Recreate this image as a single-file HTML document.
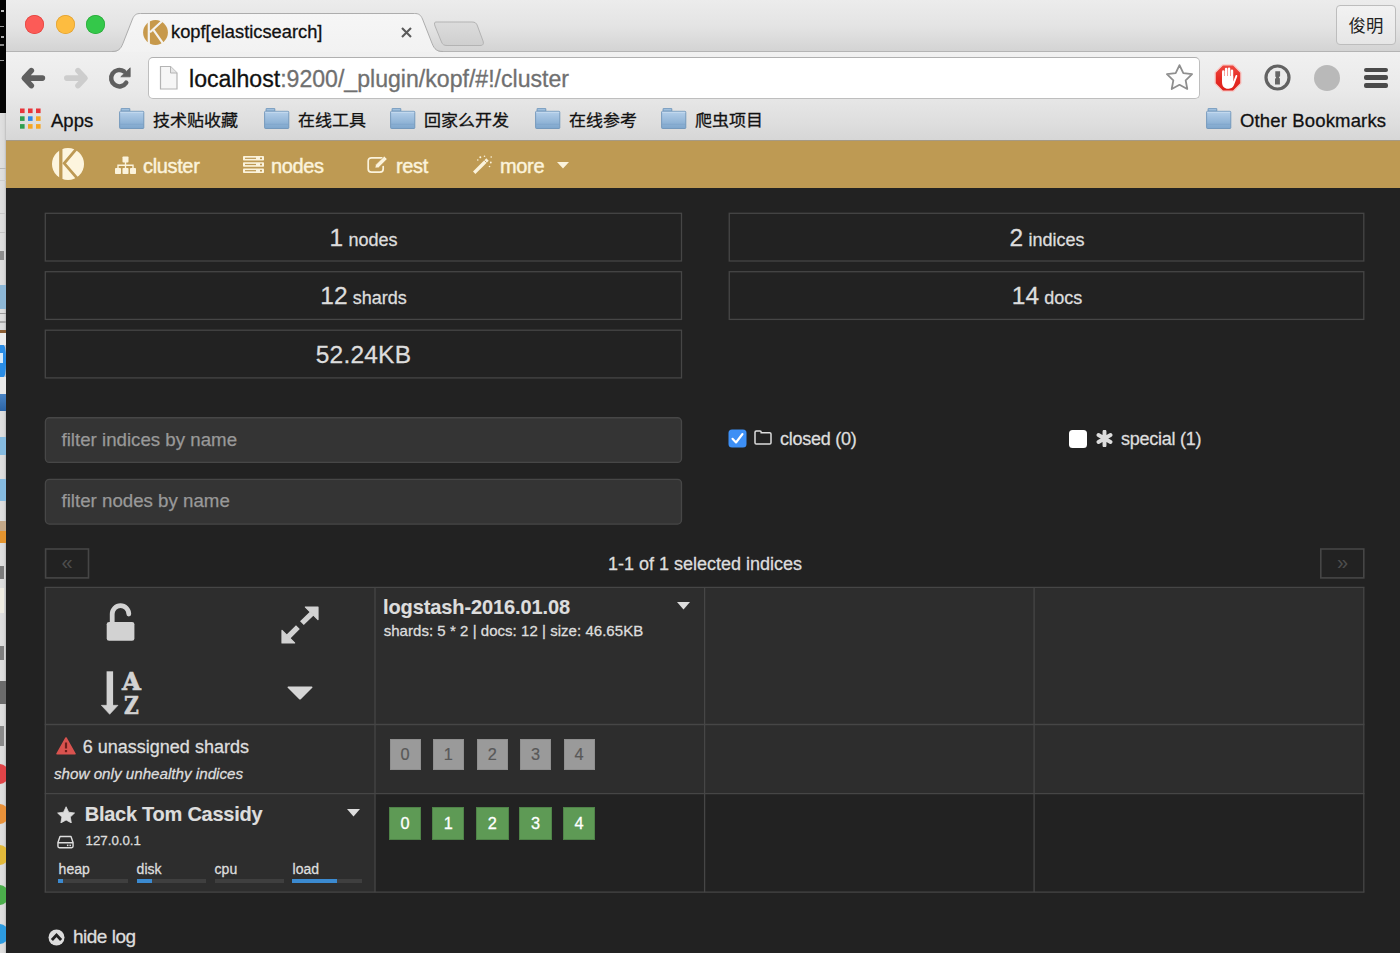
<!DOCTYPE html>
<html lang="en">
<head>
<meta charset="utf-8">
<title>kopf[elasticsearch]</title>
<style>
*{box-sizing:border-box;margin:0;padding:0}
html,body{width:1400px;height:953px;overflow:hidden;background:#222;}
body{-webkit-text-stroke:0.3px;position:relative;font-family:"Liberation Sans","Noto Sans CJK SC",sans-serif;color:#ddd;}
.abs{position:absolute}
/* ---------- left desktop strip ---------- */
#strip{left:0;top:0;width:6px;height:953px;background:#d9d9d9;overflow:hidden;z-index:0}
#strip i{position:absolute;left:0;width:6px;display:block}
/* ---------- browser chrome ---------- */
#tabbar{left:6px;top:0;width:1394px;height:52px;background:linear-gradient(#ececec,#e4e4e4 50%,#d3d3d3);}
#toolbar{left:6px;top:51px;width:1394px;height:90px;background:linear-gradient(#f1f1f1,#e9e9e9 45%,#dedede 80%,#d6d6d6);}
#tabline{left:6px;top:51px;width:1394px;height:1px;background:#b4b4b4}
#chromebottom{left:6px;top:140.3px;width:1394px;height:1px;background:#a59a86}
.tl{border-radius:50%;width:19px;height:19px;top:15px}
#url{left:148px;top:57px;width:1051.5px;height:41.5px;background:#fff;border:1px solid #bebebe;border-top-color:#b0b0b0;border-radius:5px;}
.urltxt{left:189px;top:64.5px;-webkit-text-stroke:0.3px;font-size:23.1px;line-height:28px;color:#707070;white-space:nowrap}
.urltxt b{font-weight:normal;color:#111}
.bm{top:109.7px;-webkit-text-stroke:0.3px #111;font-size:18.5px;line-height:22px;color:#111;white-space:nowrap}
.bm.cjk{font-size:17px;letter-spacing:0;top:110.2px;-webkit-text-stroke:0.3px #111;transform:scaleY(0.93);transform-origin:50% 50%}
.folder{top:108px;width:26px;height:21px}
#user{-webkit-text-stroke:0;left:1336px;top:5px;width:60px;height:39.5px;border:1px solid #bdbdbd;border-radius:4px;background:linear-gradient(#f2f2f2,#e6e6e6);font-size:17.4px;line-height:40px;text-align:center;color:#222}
#tabtitle{left:171px;top:21px;-webkit-text-stroke:0.3px #111;font-size:18.3px;line-height:22px;color:#111;white-space:nowrap}
/* ---------- app navbar ---------- */
#nav{left:6px;top:141px;width:1394px;height:46.7px;background:#be9a53}
.navtxt{top:152.8px;-webkit-text-stroke:0.45px #fbf3dc;font-size:20px;line-height:26px;color:#fbf3dc;white-space:nowrap;letter-spacing:-0.35px}
/* ---------- app body ---------- */
.panel{-webkit-text-stroke:0.3px #ddd;border:1px solid transparent;height:49px;text-align:center;color:#ddd;font-size:18px;line-height:47.6px;white-space:nowrap;letter-spacing:0}
.panel b{font-weight:normal;font-size:24.5px;letter-spacing:0.2px}
.inp{-webkit-text-stroke:0.25px #999;left:45px;width:637px;height:45px;border:1px solid transparent;font-size:18.7px;line-height:43px;color:#999;padding-left:15.5px;white-space:nowrap;letter-spacing:0}
.lbl{-webkit-text-stroke:0.3px #ddd;font-size:18px;line-height:24px;color:#ddd;white-space:nowrap;letter-spacing:0}
.pg{-webkit-text-stroke:0;top:548.5px;width:44.3px;height:30.3px;border:1px solid transparent;color:#4e4e4e;text-align:center;font-size:20px;line-height:25px}
.cell{border:1px solid #444;}
.lt{background:#2d2d2d}
.shard{width:31px;height:31px;font-size:16.3px;line-height:31px;text-align:center}
.sg{background:#5e9a55;color:#fff;box-shadow:inset 0 0 0 1px #4f8348;width:32.6px;height:32.4px;line-height:32px}
.su{background:#9a9a9a;color:#585858;box-shadow:inset 0 0 0 1px #8f8f8f;-webkit-text-stroke:0.2px}
</style>
</head>
<body>
<!-- ======= left strip (desktop behind window) ======= -->
<div id="strip" class="abs">
<i style="top:0;height:113px;background:#030303"></i>
<i style="top:10px;height:2px;left:1px;width:3px;background:#bbb"></i>
<i style="top:26px;height:1px;left:0;width:4px;background:#999"></i>
<i style="top:36px;height:2px;left:1px;width:3px;background:#aaa"></i>
<i style="top:44px;height:2px;left:0;width:4px;background:#888"></i>
<i style="top:60px;height:1px;left:0;width:4px;background:#999"></i>
<i style="top:113px;height:840px;background:linear-gradient(90deg,#e0e0e0,#dadada 70%,#bdbdbd)"></i>
<i style="top:168px;height:1px;background:#b9b9b9"></i>
<i style="top:180px;height:1px;background:#cdcdcd"></i>
<i style="top:213px;height:1px;background:#c8c8c8"></i>
<i style="top:232px;height:1px;background:#c4c4c4"></i>
<i style="top:251px;height:9px;left:0;width:4px;background:#8d8d8d"></i>
<i style="top:285px;height:24px;background:#8db7d6"></i>
<i style="top:313px;height:1px;background:#9a9a9a"></i>
<i style="top:321px;height:2px;background:#a8a8a8"></i>
<i style="top:330px;height:3px;background:#8b5e34"></i>
<i style="top:333px;height:12px;background:#ededed"></i>
<i style="top:345px;height:32px;background:#2a8de6;border-radius:0 40% 40% 0"></i>
<i style="top:353px;height:10px;left:0;width:3px;background:#d8ebfb"></i>
<i style="top:377px;height:17px;background:#e9e9e9"></i>
<i style="top:394px;height:17px;background:linear-gradient(#4a84c4,#2c64a6)"></i>
<i style="top:437px;height:18px;background:#86bbe0"></i>
<i style="top:479px;height:22px;background:#86bbe0"></i>
<i style="top:521px;height:10px;background:#c4a888"></i>
<i style="top:531px;height:12px;background:#e3942f"></i>
<i style="top:566px;height:13px;left:0;width:4px;background:#7b7b7b"></i>
<i style="top:588px;height:25px;left:0;width:4px;background:#efece2"></i>
<i style="top:646px;height:14px;left:0;width:4px;background:#7f7f7f"></i>
<i style="top:681px;height:23px;background:#6b6b6b"></i>
<i style="top:726px;height:20px;left:0;width:4px;background:#8a8a8a"></i>
<i style="top:764px;height:20px;left:-11px;width:20px;border-radius:50%;background:#e04448"></i>
<i style="top:804px;height:20px;left:-11px;width:20px;border-radius:50%;background:#e8913a"></i>
<i style="top:845px;height:20px;left:-11px;width:20px;border-radius:50%;background:#e2b93b"></i>
<i style="top:885px;height:20px;left:-11px;width:20px;border-radius:50%;background:#4cae4c"></i>
<i style="top:924px;height:20px;left:-11px;width:20px;border-radius:50%;background:#2d9be0"></i>
</div>

<div class="abs" style="left:6px;top:947px;width:7px;height:6px;background:#cfcfcf"><div style="width:7px;height:12px;background:#222;border-bottom-left-radius:7px 6px"></div></div>
<!-- ======= chrome: tab bar ======= -->
<div id="tabbar" class="abs"></div>
<div id="toolbar" class="abs"></div>
<div id="tabline" class="abs"></div>
<svg class="abs" style="left:0;top:0" width="1400" height="60" viewBox="0 0 1400 60">
  <defs>
    <linearGradient id="tabg" x1="0" y1="0" x2="0" y2="1"><stop offset="0" stop-color="#f6f6f6"/><stop offset="1" stop-color="#f2f2f2"/></linearGradient>
    <linearGradient id="ntg" x1="0" y1="0" x2="0" y2="1"><stop offset="0" stop-color="#dcdcdc"/><stop offset="1" stop-color="#cfcfcf"/></linearGradient>
  </defs>
  <!-- active tab -->
  <path d="M112 52 C120 52 121.5 47 123.5 42 L132.5 19 C134.5 14.5 136.5 13.5 140.5 13.5 L414.5 13.5 C418.5 13.5 420.5 14.5 422.5 19 L431.5 42 C433.5 47 435 52 443 52 Z" fill="url(#tabg)"/>
  <path d="M112 51.5 C120 51.5 121.5 47 123.5 42 L132.5 19 C134.5 14.5 136.5 13.5 140.5 13.5 L414.5 13.5 C418.5 13.5 420.5 14.5 422.5 19 L431.5 42 C433.5 47 435 51.5 443 51.5" fill="none" stroke="#adadad" stroke-width="1"/>
  <!-- new tab button -->
  <path d="M436 22 L472 22 C475 22 476.5 23 477.5 26 L483 41 C484 44 483 45.5 480 45.5 L447 45.5 C444 45.5 442.5 44.5 441.5 42 L435 26 C434 23 434.5 22 436 22 Z" fill="url(#ntg)" stroke="#b3b3b3" stroke-width="1"/>
</svg>
<div class="abs tl" style="left:24.5px;background:#fc5b57;box-shadow:inset 0 0 0 0.7px #e2443f"></div>
<div class="abs tl" style="left:55.5px;background:#fdbc40;box-shadow:inset 0 0 0 0.7px #dfa133"></div>
<div class="abs tl" style="left:86px;background:#34c84a;box-shadow:inset 0 0 0 0.7px #2aa93a"></div>
<!-- favicon -->
<svg class="abs" style="left:143px;top:19.7px" width="25" height="25" viewBox="0 0 25 25">
  <circle cx="12.5" cy="12.5" r="12.4" fill="#c7994b"/>
  <path d="M5.8 -1 L5.8 26 M20.5 -0.2 L7.0 12.3 M10.4 9.8 L22 26.2" stroke="#f4f2ee" stroke-width="2.2" fill="none"/>
</svg>
<div id="tabtitle" class="abs">kopf[elasticsearch]</div>
<svg class="abs" style="left:400px;top:26px" width="13" height="13" viewBox="0 0 13 13"><path d="M2 2 L11 11 M11 2 L2 11" stroke="#5a5a5a" stroke-width="2.1"/></svg>
<div id="user" class="abs">俊明</div>

<!-- ======= chrome: toolbar ======= -->
<svg class="abs" style="left:18px;top:64px" width="120" height="28" viewBox="0 0 120 28">
  <!-- back -->
  <path d="M24.4 14.1 L7 14.1 M13.3 6.6 L6.3 14.1 L13.3 21.6" stroke="#5f5f5f" stroke-width="5.6" fill="none" stroke-linecap="round" stroke-linejoin="round"/>
  <!-- forward -->
  <path d="M48.8 14.1 L66.3 14.1 M60 6.6 L67 14.1 L60 21.6" stroke="#cdcdcd" stroke-width="5.6" fill="none" stroke-linecap="round" stroke-linejoin="round"/>
  <!-- reload -->
  <path d="M108.2 18.7 A8.2 8.2 0 1 1 106 7.4" stroke="#5f5f5f" stroke-width="4.5" fill="none" stroke-linecap="round"/>
  <path d="M112.2 3.8 L112.2 12.8 L102.8 12.8 Z" fill="#5f5f5f" stroke="#5f5f5f" stroke-width="0.8" stroke-linejoin="round"/>
</svg>
<div id="url" class="abs"></div>
<svg class="abs" style="left:159px;top:65px" width="20" height="26" viewBox="0 0 20 26">
  <path d="M1.5 1.5 L11.5 1.5 L18 8 L18 24 L1.5 24 Z" fill="#f6f6f6" stroke="#b4b4b4" stroke-width="1.2"/>
  <path d="M11.5 1.5 L11.5 8 L18 8" fill="#e6e6e6" stroke="#b4b4b4" stroke-width="1"/>
</svg>
<div class="abs urltxt"><b>localhost</b>:9200/_plugin/kopf/#!/cluster</div>
<!-- star -->
<svg class="abs" style="left:1164px;top:62px" width="31" height="31" viewBox="0 0 31 31">
  <path d="M15.50 3.10 L19.32 11.04 L28.05 12.22 L21.68 18.31 L23.26 26.98 L15.50 22.80 L7.74 26.98 L9.32 18.31 L2.95 12.22 L11.68 11.04 Z" fill="#fdfdfd" stroke="#8e8e8e" stroke-width="1.8" stroke-linejoin="round"/>
</svg>
<!-- adblock -->
<svg class="abs" style="left:1214px;top:63.5px" width="28" height="28" viewBox="0 0 28 28">
  <defs><linearGradient id="adg" x1="0" y1="0" x2="0" y2="1"><stop offset="0" stop-color="#ee4a41"/><stop offset="0.5" stop-color="#e62c25"/><stop offset="1" stop-color="#dd1f1a"/></linearGradient></defs>
  <path d="M8.7 0.9 L19.3 0.9 L26.9 8.6 L26.9 19.4 L19.3 27.1 L8.7 27.1 L1.1 19.4 L1.1 8.6 Z" fill="url(#adg)" stroke="#f6c9c6" stroke-width="1.3" stroke-linejoin="round"/>
  <g fill="#fff">
    <rect x="8.0" y="6.2" width="2.5" height="10" rx="1.25"/>
    <rect x="10.9" y="3.8" width="2.5" height="12" rx="1.25"/>
    <rect x="13.8" y="3.4" width="2.5" height="12" rx="1.25"/>
    <rect x="16.7" y="5.4" width="2.5" height="11" rx="1.25"/>
    <path d="M8 12 L19.2 12 L19.2 17.5 L21.6 11.6 C22.2 10.6 23.6 11.2 23.2 12.4 L20.2 20.5 C18.8 24 16.5 24.8 14 24.8 C10.5 24.8 8 22.5 8 18 Z"/>
  </g>
</svg>
<!-- 1password -->
<svg class="abs" style="left:1263px;top:63px" width="30" height="30" viewBox="0 0 30 30">
  <circle cx="14.5" cy="14.5" r="11.5" fill="#ebebeb" stroke="#626262" stroke-width="3.2"/>
  <path d="M12.3 8.2 L17.1 8.2 L17.1 13 L15.9 14.4 L16.9 15.6 L16.9 21.5 L12 21.5 L12 16 L13.2 14.6 L12.3 13.4 Z" fill="#666"/>
</svg>
<div class="abs" style="left:1314px;top:64.6px;width:26px;height:26px;border-radius:50%;background:#b9b9b9"></div>
<!-- hamburger -->
<div class="abs" style="left:1364.3px;top:67.9px;width:23.7px;height:4.5px;border-radius:2px;background:#4a4a4a"></div>
<div class="abs" style="left:1364.3px;top:75.4px;width:23.7px;height:4.5px;border-radius:2px;background:#4a4a4a"></div>
<div class="abs" style="left:1364.3px;top:83.1px;width:23.7px;height:4.7px;border-radius:2px;background:#4a4a4a"></div>

<!-- ======= chrome: bookmarks bar ======= -->
<svg class="abs" style="left:20px;top:108px" width="21" height="21" viewBox="0 0 21 21">
  <rect x="0" y="0.5" width="4.6" height="4.6" fill="#e8353a"/><rect x="8" y="0.5" width="4.6" height="4.6" fill="#e8353a"/><rect x="16" y="0.5" width="4.6" height="4.6" fill="#e8353a"/>
  <rect x="0" y="8.3" width="4.6" height="4.6" fill="#2f9e4f"/><rect x="8" y="8.3" width="4.6" height="4.6" fill="#2d88e5"/><rect x="16" y="8.3" width="4.6" height="4.6" fill="#f5a623"/>
  <rect x="0" y="16.1" width="4.6" height="4.6" fill="#2f9e4f"/><rect x="8" y="16.1" width="4.6" height="4.6" fill="#f5a623"/><rect x="16" y="16.1" width="4.6" height="4.6" fill="#f5a623"/>
</svg>
<div class="abs bm" style="left:51px">Apps</div>
<svg width="0" height="0" style="position:absolute"><defs>
  <linearGradient id="fg" x1="0" y1="0" x2="0" y2="1"><stop offset="0" stop-color="#b4cfea"/><stop offset="1" stop-color="#7ea6cc"/></linearGradient>
  <symbol id="fold" viewBox="0 0 26 21"><path d="M2.1 3.2 L2.1 0.9 C2.1 0.5 2.3 0.3 2.7 0.3 L10.2 0.3 C10.6 0.3 10.8 0.5 10.8 0.9 L10.8 3.2 Z" fill="#9fbfdd" stroke="#6e94b9" stroke-width="0.9"/><rect x="0.6" y="3.3" width="24.2" height="17.2" rx="0.8" fill="url(#fg)" stroke="#6e94b9" stroke-width="0.9"/><path d="M1.2 4.3 L24.2 4.3" stroke="#c9ddf1" stroke-width="0.9"/><path d="M1.2 16.3 L24.2 16.3" stroke="#769ec4" stroke-width="0.7" opacity="0.6"/></symbol>
</defs></svg>
<svg class="abs folder" style="left:119px"><use href="#fold"/></svg>
<div class="abs bm cjk" style="left:153px">技术贴收藏</div>
<svg class="abs folder" style="left:264px"><use href="#fold"/></svg>
<div class="abs bm cjk" style="left:298px">在线工具</div>
<svg class="abs folder" style="left:390px"><use href="#fold"/></svg>
<div class="abs bm cjk" style="left:424px">回家么开发</div>
<svg class="abs folder" style="left:535px"><use href="#fold"/></svg>
<div class="abs bm cjk" style="left:569px">在线参考</div>
<svg class="abs folder" style="left:661px"><use href="#fold"/></svg>
<div class="abs bm cjk" style="left:695px">爬虫项目</div>
<svg class="abs folder" style="left:1206px"><use href="#fold"/></svg>
<div class="abs bm" style="left:1240px;letter-spacing:0.15px">Other Bookmarks</div>
<div id="chromebottom" class="abs"></div>

<!-- ======= app navbar ======= -->
<div id="nav" class="abs"></div>
<svg class="abs" style="left:52.4px;top:147.9px" width="32" height="32" viewBox="0 0 32 32">
  <circle cx="16" cy="16" r="16" fill="#fdf5de"/>
  <path d="M8.8 -1 L8.8 33" stroke="#bd9954" stroke-width="3.3" fill="none"/>
  <path d="M26 -1 L12.2 15.3 L27.5 33" stroke="#bd9954" stroke-width="2.8" fill="none" stroke-linejoin="miter"/>
</svg>
<!-- sitemap icon -->
<svg class="abs" style="left:115px;top:156px" width="21" height="19" viewBox="0 0 21 19">
  <g fill="#fbf3dc"><rect x="7.5" y="0.5" width="6" height="6" rx="0.8"/><rect x="0" y="12" width="6" height="6" rx="0.8"/><rect x="7.5" y="12" width="6" height="6" rx="0.8"/><rect x="15" y="12" width="6" height="6" rx="0.8"/></g>
  <path d="M10.5 6 L10.5 12 M3 12 L3 9.2 L18 9.2 L18 12" stroke="#fbf3dc" stroke-width="1.4" fill="none"/>
</svg>
<div class="abs navtxt" style="left:143px">cluster</div>
<!-- server icon -->
<svg class="abs" style="left:243px;top:156px" width="21" height="17" viewBox="0 0 21 17">
  <g fill="#fbf3dc"><rect x="0" y="0" width="21" height="4.6" rx="0.8"/><rect x="0" y="6.2" width="21" height="4.6" rx="0.8"/><rect x="0" y="12.4" width="21" height="4.6" rx="0.8"/></g>
  <g fill="#bd9954"><rect x="2" y="1.7" width="11" height="1.2"/><rect x="2" y="7.9" width="11" height="1.2"/><rect x="2" y="14.1" width="11" height="1.2"/><rect x="17" y="1.5" width="2" height="1.6"/><rect x="17" y="7.7" width="2" height="1.6"/><rect x="17" y="13.9" width="2" height="1.6"/></g>
</svg>
<div class="abs navtxt" style="left:271px">nodes</div>
<!-- edit icon -->
<svg class="abs" style="left:367px;top:155px" width="22" height="19" viewBox="0 0 22 19">
  <path d="M15 2.8 L4.5 2.8 C2.5 2.8 1.2 4 1.2 6 L1.2 14 C1.2 16 2.5 17.2 4.5 17.2 L13 17.2 C15 17.2 16.2 16 16.2 14 L16.2 11.5" stroke="#fbf3dc" stroke-width="1.7" fill="none" stroke-linecap="round"/>
  <path d="M8 13 L8.6 9.8 L17.3 1.2 L20.2 4.1 L11.5 12.7 Z" fill="#fbf3dc" stroke="#bd9954" stroke-width="0.6"/>
</svg>
<div class="abs navtxt" style="left:396px">rest</div>
<!-- magic wand icon -->
<svg class="abs" style="left:472px;top:155px" width="21" height="20" viewBox="0 0 21 20">
  <path d="M2.2 17.8 L15.5 4.5" stroke="#fbf3dc" stroke-width="3.4" stroke-linecap="butt"/>
  <path d="M12.4 5.4 L14.6 7.6" stroke="#bd9954" stroke-width="0.9"/>
  <g fill="#fbf3dc"><circle cx="8.3" cy="2.2" r="1"/><circle cx="12.5" cy="1.2" r="0.8"/><circle cx="5.8" cy="5" r="0.8"/><circle cx="18.8" cy="7.5" r="0.9"/><circle cx="17.5" cy="11.5" r="0.8"/><circle cx="19.2" cy="2" r="0.8"/></g>
</svg>
<div class="abs navtxt" style="left:500px">more</div>
<svg class="abs" style="left:557px;top:162px" width="12" height="7" viewBox="0 0 12 7"><path d="M0 0 L12 0 L6 6.5 Z" fill="#fbf3dc"/></svg>

<!-- ======= table grid ======= -->
<div class="abs lt" style="left:45px;top:587px;width:1319px;height:207px"></div>
<div class="abs lt" style="left:45px;top:793px;width:330px;height:99px"></div>
<svg class="abs" style="left:0;top:190px" width="1400" height="763" viewBox="0 190 1400 763" fill="none" stroke="#464646" stroke-width="1.3">
  <rect x="45.3" y="213.3" width="636.20" height="47.70"/>
  <rect x="45.3" y="271.7" width="636.20" height="47.70"/>
  <rect x="45.3" y="330.2" width="636.20" height="47.70"/>
  <rect x="729.25" y="213.3" width="634.55" height="47.70"/>
  <rect x="729.25" y="271.7" width="634.55" height="47.70"/>
  <rect x="45.4" y="417.75" width="636.10" height="44.65" rx="4" fill="#343434" stroke="#474747"/>
  <rect x="45.4" y="479.4" width="636.10" height="44.65" rx="4" fill="#343434" stroke="#474747"/>
  <rect x="45.6" y="549.0" width="42.9" height="28.9" stroke-width="1.6"/>
  <rect x="1320.8" y="549.0" width="43.0" height="28.9" stroke-width="1.6"/>
  <path d="M44.65 587.45 L1364.45 587.45"/>
  <path d="M44.65 724.5 L1364.45 724.5"/>
  <path d="M44.65 793.6 L1364.45 793.6"/>
  <path d="M44.65 892.2 L1364.45 892.2"/>
  <path d="M45.3 587.45 L45.3 892.2"/>
  <path d="M375.0 587.45 L375.0 892.2"/>
  <path d="M704.6 587.45 L704.6 892.2"/>
  <path d="M1034.1 587.45 L1034.1 892.2"/>
  <path d="M1363.8 587.45 L1363.8 892.2"/>
</svg>
<!-- ======= stat panels ======= -->
<div class="abs panel" style="left:45px;top:213px;width:637px"><b>1</b> nodes</div>
<div class="abs panel" style="left:45px;top:271px;width:637px"><b>12</b> shards</div>
<div class="abs panel" style="left:45px;top:330px;width:637px"><b>52.24KB</b></div>
<div class="abs panel" style="left:729px;top:213px;width:636px"><b>2</b> indices</div>
<div class="abs panel" style="left:729px;top:271px;width:636px"><b>14</b> docs</div>

<!-- ======= filters ======= -->
<div class="abs inp" style="top:417px;height:46px;line-height:43.2px">filter indices by name</div>
<div class="abs inp" style="top:479px;height:46px;line-height:42.6px">filter nodes by name</div>
<!-- checked checkbox -->
<svg class="abs" style="left:728px;top:429px" width="19" height="19" viewBox="0 0 19 19">
  <rect x="0.5" y="0.5" width="18" height="18" rx="3.5" fill="#3d8ff5"/>
  <path d="M4.5 9.8 L8 13.5 L14.5 5" stroke="#fff" stroke-width="2.1" fill="none" stroke-linecap="round" stroke-linejoin="round"/>
</svg>
<!-- folder-o icon -->
<svg class="abs" style="left:754px;top:430px" width="18" height="15" viewBox="0 0 18 15">
  <path d="M1 2.2 C1 1.4 1.5 1 2.3 1 L6 1 C6.8 1 7.2 1.4 7.2 2.2 L7.2 2.8 L15.7 2.8 C16.5 2.8 17 3.3 17 4.1 L17 12.7 C17 13.5 16.5 14 15.7 14 L2.3 14 C1.5 14 1 13.5 1 12.7 Z" fill="none" stroke="#ddd" stroke-width="1.5"/>
</svg>
<div class="abs lbl" style="left:780px;top:427px;letter-spacing:-0.25px">closed (0)</div>
<div class="abs" style="left:1069px;top:430px;width:18px;height:18px;border-radius:3.5px;background:#fff"></div>
<!-- asterisk icon -->
<svg class="abs" style="left:1096px;top:430px" width="17" height="17" viewBox="0 0 17 17">
  <path d="M8.5 1.6 L8.5 15.4 M2.5 5 L14.5 12 M14.5 5 L2.5 12" stroke="#ddd" stroke-width="3.9" stroke-linecap="round"/>
</svg>
<div class="abs lbl" style="left:1121px;top:427px;letter-spacing:-0.25px">special (1)</div>

<!-- ======= pager ======= -->
<div class="abs pg" style="left:45px">&laquo;</div>
<div class="abs lbl" style="left:45px;width:1320px;top:552px;text-align:center">1-1 of 1 selected indices</div>
<div class="abs pg" style="left:1320.3px">&raquo;</div>

<!-- header cell icons -->
<!-- unlock -->
<svg class="abs" style="left:105px;top:603px" width="30" height="39" viewBox="0 0 30 39">
  <path d="M7.2 20 L7.2 11 A8.3 8.3 0 0 1 23.8 11" stroke="#d2d2d2" stroke-width="4.8" fill="none" stroke-linecap="round"/>
  <rect x="1.7" y="18.9" width="27.7" height="18.9" rx="2.4" fill="#d2d2d2"/>
</svg>
<!-- expand arrows -->
<svg class="abs" style="left:281px;top:606px" width="38" height="38" viewBox="0 0 38 38">
  <path d="M31 7.4 L20.9 17.1 M7 31 L16.9 21.2" stroke="#d2d2d2" stroke-width="5.4"/>
  <path d="M37 1 L37 13.6 L24.4 1 Z M1 37 L1 24.4 L13.6 37 Z" fill="#d2d2d2" stroke="#d2d2d2" stroke-width="1.2" stroke-linejoin="round"/>
</svg>
<!-- sort A-Z -->
<svg class="abs" style="left:100px;top:670px" width="42" height="46" viewBox="0 0 42 46">
  <path d="M9.85 1.3 L9.85 36" stroke="#d2d2d2" stroke-width="6.5"/>
  <path d="M1.3 35.3 L18 35.3 L9.7 44.3 Z" fill="#d2d2d2" stroke="#d2d2d2" stroke-width="0.6" stroke-linejoin="round"/>
  <text x="21.9" y="19.6" font-family="DejaVu Serif,Liberation Serif,serif" font-weight="bold" font-size="24.7" fill="#d2d2d2" stroke="#d2d2d2" stroke-width="0.7" textLength="18.9" lengthAdjust="spacingAndGlyphs">A</text>
  <text x="24.1" y="44.2" font-family="DejaVu Serif,Liberation Serif,serif" font-weight="bold" font-size="24.7" fill="#d2d2d2" stroke="#d2d2d2" stroke-width="0.7" textLength="14.8" lengthAdjust="spacingAndGlyphs">Z</text>
</svg>
<!-- caret -->
<svg class="abs" style="left:287px;top:686px" width="26" height="14" viewBox="0 0 26 14"><path d="M0.5 1.5 C0.5 0.8 1 0.5 1.6 0.5 L24.4 0.5 C25 0.5 25.5 0.8 25.5 1.5 L13.8 13.2 C13.3 13.7 12.7 13.7 12.2 13.2 Z" fill="#d5d5d5"/></svg>

<!-- index header -->
<div class="abs" style="left:383px;top:595px;font-size:20px;line-height:24px;font-weight:bold;-webkit-text-stroke:0.15px;color:#ddd;letter-spacing:-0.1px;white-space:nowrap">logstash-2016.01.08</div>
<svg class="abs" style="left:677px;top:602px" width="13" height="8" viewBox="0 0 13 8"><path d="M0 0 L13 0 L6.5 7.5 Z" fill="#ddd"/></svg>
<div class="abs" style="left:383.7px;top:621px;font-size:15px;line-height:20px;color:#ddd;letter-spacing:0.04px;white-space:nowrap">shards: 5 * 2 | docs: 12 | size: 46.65KB</div>

<!-- unassigned row -->
<svg class="abs" style="left:56px;top:737px" width="20" height="18" viewBox="0 0 20 18">
  <path d="M10 1 L19 16.8 L1 16.8 Z" fill="#d9534f" stroke="#d9534f" stroke-width="1.6" stroke-linejoin="round"/>
  <path d="M10 5.5 L10 11.5" stroke="#6e1f1c" stroke-width="2.2"/><rect x="8.9" y="13" width="2.2" height="2.2" fill="#6e1f1c"/>
</svg>
<div class="abs lbl" style="left:82.8px;top:735px">6 unassigned shards</div>
<div class="abs" style="left:54px;top:763.6px;font-size:15.2px;line-height:20px;font-style:italic;color:#ddd;letter-spacing:0;white-space:nowrap">show only unhealthy indices</div>
<div class="abs shard su" style="left:389.5px;top:738.7px">0</div>
<div class="abs shard su" style="left:432.8px;top:738.7px">1</div>
<div class="abs shard su" style="left:476.8px;top:738.7px">2</div>
<div class="abs shard su" style="left:520px;top:738.7px">3</div>
<div class="abs shard su" style="left:563.6px;top:738.7px">4</div>

<!-- node row -->
<svg class="abs" style="left:56.6px;top:806.3px" width="18.2" height="17.2" viewBox="0 0 19 18">
  <path d="M9.5 0.8 L12.2 6.5 L18.4 7.3 L13.9 11.6 L15 17.7 L9.5 14.7 L4 17.7 L5.1 11.6 L0.6 7.3 L6.8 6.5 Z" fill="#ddd" stroke="#ddd" stroke-width="0.8" stroke-linejoin="round"/>
</svg>
<div class="abs" style="left:84.7px;top:801.7px;font-size:20px;line-height:24px;font-weight:bold;-webkit-text-stroke:0.15px;color:#ddd;letter-spacing:-0.25px;white-space:nowrap">Black Tom Cassidy</div>
<svg class="abs" style="left:347px;top:809px" width="13" height="8" viewBox="0 0 13 8"><path d="M0 0 L13 0 L6.5 7.5 Z" fill="#ddd"/></svg>
<!-- hdd icon -->
<svg class="abs" style="left:57.4px;top:834.6px" width="17" height="14.2" viewBox="0 0 18 15">
  <path d="M3.2 1.5 L14.8 1.5 L17 8 L17 12 C17 13 16.5 13.5 15.5 13.5 L2.5 13.5 C1.5 13.5 1 13 1 12 L1 8 Z M1 8.2 L17 8.2" stroke="#ddd" stroke-width="1.5" fill="none" stroke-linejoin="round"/>
  <rect x="10.5" y="10.2" width="1.6" height="1.6" fill="#ddd"/><rect x="13.2" y="10.2" width="1.6" height="1.6" fill="#ddd"/>
</svg>
<div class="abs" style="left:85.5px;top:831.5px;font-size:13.3px;line-height:18px;color:#ddd;white-space:nowrap">127.0.0.1</div>
<div class="abs" style="left:58.6px;top:859.5px;font-size:14px;line-height:18px;color:#ddd;white-space:nowrap">heap</div>
<div class="abs" style="left:136.6px;top:859.5px;font-size:14px;line-height:18px;color:#ddd;white-space:nowrap">disk</div>
<div class="abs" style="left:214.6px;top:859.5px;font-size:14px;line-height:18px;color:#ddd;white-space:nowrap">cpu</div>
<div class="abs" style="left:292.6px;top:859.5px;font-size:14px;line-height:18px;color:#ddd;white-space:nowrap">load</div>
<div class="abs" style="left:58px;top:879px;width:70px;height:4px;background:#3f3f3f"><div style="width:5px;height:4px;background:#3b8ad0"></div></div>
<div class="abs" style="left:137px;top:879px;width:69px;height:4px;background:#3f3f3f"><div style="width:15px;height:4px;background:#3b8ad0"></div></div>
<div class="abs" style="left:215px;top:879px;width:69px;height:4px;background:#3f3f3f"></div>
<div class="abs" style="left:292px;top:879px;width:70px;height:4px;background:#3f3f3f"><div style="width:45px;height:4px;background:#3b8ad0"></div></div>
<div class="abs shard sg" style="left:388.8px;top:807.3px">0</div>
<div class="abs shard sg" style="left:431.9px;top:807.3px">1</div>
<div class="abs shard sg" style="left:476.0px;top:807.3px">2</div>
<div class="abs shard sg" style="left:519.3px;top:807.3px">3</div>
<div class="abs shard sg" style="left:562.8px;top:807.3px">4</div>

<!-- hide log -->
<svg class="abs" style="left:48px;top:929px" width="17" height="17" viewBox="0 0 17 17">
  <circle cx="8.5" cy="8.5" r="8" fill="#ddd"/>
  <path d="M3.9 10.9 L8.5 6.1 L13.1 10.9" stroke="#222" stroke-width="2.9" fill="none" stroke-linejoin="miter"/>
</svg>
<div class="abs" style="left:73px;top:925px;font-size:19px;line-height:24px;color:#ddd;letter-spacing:-0.5px;white-space:nowrap">hide log</div>

</body>
</html>
